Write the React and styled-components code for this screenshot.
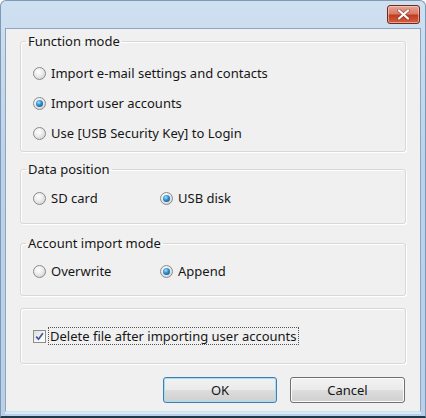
import React, { useState } from "react";
import styled, { createGlobalStyle } from "styled-components";

const GlobalStyle = createGlobalStyle`
  html, body {
    margin: 0;
    padding: 0;
    background: #ffffff;
  }
  body {
    font-family: "Noto Sans", "Open Sans", sans-serif;
    font-size: 13px;
    color: #161616;
  }
`;

const Window = styled.div`
  width: 426px;
  height: 418px;
  box-sizing: border-box;
  display: flex;
  flex-direction: column;
  border: 1px solid #7f98b3;
  border-radius: 6px 6px 0 0;
  border-bottom: 2px solid #203848;
  background: linear-gradient(180deg, #cfe0f1 0%, #bcd2ea 40%, #b9d0e8 100%);
  padding: 0 4px 4px 4px;
`;

const TitleBar = styled.div`
  height: 27px;
  display: flex;
  align-items: flex-start;
  justify-content: flex-end;
  padding-top: 4px;
  padding-right: 1px;
  box-sizing: border-box;
`;

const CloseButton = styled.button`
  width: 33px;
  height: 19px;
  padding: 0;
  border: 1px solid #6f2a1e;
  border-radius: 3px;
  background: linear-gradient(180deg, #e8a595 0%, #d87c66 45%, #c23d22 55%, #d35f42 100%);
  box-shadow: inset 0 0 0 1px rgba(255, 220, 210, 0.55);
  display: flex;
  align-items: center;
  justify-content: center;
  cursor: default;
`;

const Content = styled.div`
  flex: 1;
  background: #f0f0f0;
  border: 1px solid #8ca6bf;
  border-bottom-color: #c9e2ee;
  padding: 5px 14px 0 14px;
  display: flex;
  flex-direction: column;
  box-shadow: 0 2px 0 #d6ebf4;
`;

const Group = styled.fieldset`
  margin: 0 0 ${(p) => p.$gap ?? 11}px 0;
  padding: ${(p) => p.$pad};
  border: 1px solid #d8d8d8;
  border-radius: 3px;
  box-shadow: inset 1px 1px 0 #ffffff, 1px 1px 0 #ffffff;
  min-width: 0;
`;

const Legend = styled.legend`
  padding: 0 2px;
  margin-left: -7px;
  line-height: 15px;
  font-size: 13px;
`;

const Row = styled.div`
  height: 30px;
  display: flex;
  align-items: center;
`;

const Columns = styled.div`
  height: 30px;
  display: grid;
  grid-template-columns: 127px 1fr;
  align-items: center;
`;

const Option = styled.label`
  display: flex;
  align-items: center;
  gap: 5px;
  cursor: default;
  white-space: nowrap;
`;

const RadioDot = styled.span`
  width: 11px;
  height: 11px;
  border-radius: 50%;
  border: 1px solid #8a8b8b;
  background: radial-gradient(circle at 40% 35%, #ffffff 0%, #eeeeee 40%, #c8c8c8 100%);
  position: relative;
  flex: none;
  &::after {
    content: "";
    position: absolute;
    left: 2px;
    top: 2px;
    width: 7px;
    height: 7px;
    border-radius: 50%;
    display: ${(p) => (p.$on ? "block" : "none")};
    background: radial-gradient(circle at 40% 35%, #9fe1fb 0%, #2a8ccd 45%, #12426f 100%);
  }
`;

const CheckBox = styled.span`
  width: 11px;
  height: 11px;
  border: 1px solid #8d8e8e;
  background: linear-gradient(135deg, #dcdcdc 0%, #f6f6f6 60%, #ffffff 100%);
  display: flex;
  align-items: center;
  justify-content: center;
  flex: none;
`;

const FocusText = styled.span`
  outline: 1px dotted #555555;
  outline-offset: 0;
  padding: 0 1px;
  line-height: 16px;
  margin-left: -2px;
`;

const ButtonRow = styled.div`
  display: flex;
  justify-content: flex-end;
  gap: 13px;
  padding-right: 1px;
  margin-top: 1px;
`;

const Button = styled.button`
  width: ${(p) => p.$w}px;
  height: 26px;
  font-family: inherit;
  font-size: 13px;
  color: #161616;
  border-radius: 3px;
  border: 1px solid ${(p) => (p.$default ? "#3c7fb1" : "#707070")};
  background: linear-gradient(180deg, #f2f2f2 0%, #ebebeb 48%, #dddddd 52%, #cfcfcf 100%);
  box-shadow: inset 0 0 0 1px ${(p) => (p.$default ? "#a8dcf3" : "#fbfbfb")};
  cursor: default;
`;

function Radio({ value, current, onPick, children }) {
  return (
    <Option onClick={() => onPick(value)}>
      <RadioDot $on={current === value} />
      {children}
    </Option>
  );
}

export default function App() {
  const [mode, setMode] = useState("accounts");
  const [position, setPosition] = useState("usb");
  const [importMode, setImportMode] = useState("append");
  const [deleteFile, setDeleteFile] = useState(true);

  return (
    <>
      <GlobalStyle />
      <Window>
        <TitleBar>
          <CloseButton aria-label="Close">
            <svg width="13" height="11" viewBox="0 0 13 11">
              <path
                d="M2 1.5 L11 9.5 M11 1.5 L2 9.5"
                stroke="#6b2418"
                strokeWidth="3.6"
                strokeLinecap="round"
                opacity="0.55"
              />
              <path
                d="M2 1.5 L11 9.5 M11 1.5 L2 9.5"
                stroke="#ffffff"
                strokeWidth="2.2"
                strokeLinecap="round"
              />
            </svg>
          </CloseButton>
        </TitleBar>
        <Content>
          <Group $pad="9px 12px 3px 12px" $gap={10}>
            <Legend>Function mode</Legend>
            <Row>
              <Radio value="mail" current={mode} onPick={setMode}>
                Import e-mail settings and contacts
              </Radio>
            </Row>
            <Row>
              <Radio value="accounts" current={mode} onPick={setMode}>
                Import user accounts
              </Radio>
            </Row>
            <Row>
              <Radio value="key" current={mode} onPick={setMode}>
                Use [USB Security Key] to Login
              </Radio>
            </Row>
          </Group>

          <Group $pad="6px 12px 10px 12px" $gap={12}>
            <Legend>Data position</Legend>
            <Columns>
              <Radio value="sd" current={position} onPick={setPosition}>
                SD card
              </Radio>
              <Radio value="usb" current={position} onPick={setPosition}>
                USB disk
              </Radio>
            </Columns>
          </Group>

          <Group $pad="5px 12px 9px 12px" $gap={12}>
            <Legend>Account import mode</Legend>
            <Columns>
              <Radio value="overwrite" current={importMode} onPick={setImportMode}>
                Overwrite
              </Radio>
              <Radio value="append" current={importMode} onPick={setImportMode}>
                Append
              </Radio>
            </Columns>
          </Group>

          <Group $pad="12px 12px 12px 12px" $gap={12}>
            <Row>
              <Option onClick={() => setDeleteFile(!deleteFile)}>
                <CheckBox>
                  {deleteFile && (
                    <svg width="9" height="9" viewBox="0 0 9 9">
                      <path
                        d="M1.2 4.6 L3.5 7.2 L7.9 1.2"
                        fill="none"
                        stroke="#3f5594"
                        strokeWidth="1.7"
                      />
                    </svg>
                  )}
                </CheckBox>
                <FocusText>Delete file after importing user accounts</FocusText>
              </Option>
            </Row>
          </Group>

          <ButtonRow>
            <Button $w={114} $default>
              OK
            </Button>
            <Button $w={115}>Cancel</Button>
          </ButtonRow>
        </Content>
      </Window>
    </>
  );
}
